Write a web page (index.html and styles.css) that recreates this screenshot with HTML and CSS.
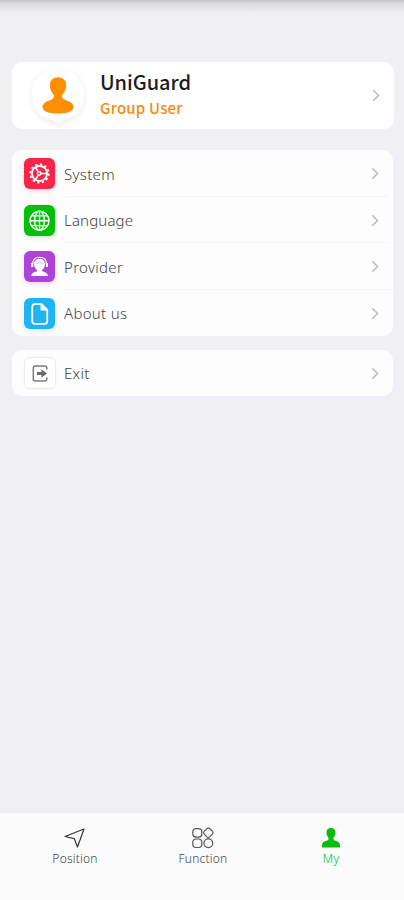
FILE: index.html
```html
<!DOCTYPE html>
<html lang="en">
<head>
<meta charset="utf-8">
<meta name="viewport" content="width=device-width, initial-scale=1">
<title>My</title>
<link rel="stylesheet" href="styles.css">
</head>
<body>
<svg width="0" height="0" class="defs">
  <symbol id="chevron" viewBox="0 0 8 13"><path d="M1.2 1.2 6.6 6.5 1.2 11.8" fill="none" stroke="#bdbdbf" stroke-width="1.600"/></symbol>
</svg>
<div class="top-shade"></div>
<main class="content">
  <section class="card profile">
    <svg class="avatar" viewBox="0 0 56 58">
      <path class="avatar-bg" d="M28 1C43 1 54 12 54 27C54 40 46 50 34 52L28 55L22 52C10 50 2 40 2 27C2 12 13 1 28 1Z" fill="#fff"/>
      <path d="M28 9.200c-5.200 0-8.400 3.500-8.100 8.500.2 4 1.600 6.700 3.900 9.100.7 2.500-.5 4.300-3.800 5.400-4.500 1.400-7.500 3.400-7.500 6.700 0 4.500 6.500 6.500 15.500 6.500s15.500-2 15.500-6.500c0-3.300-3-5.300-7.500-6.700-3.300-1.100-4.500-2.900-3.800-5.400 2.300-2.400 3.700-5.100 3.900-9.100.3-5-2.900-8.500-8.100-8.500Z" fill="#ff8e00"/>
    </svg>
    <div class="who"><h1>UniGuard</h1><p>Group User</p></div>
    <svg class="chev"><use href="#chevron"/></svg>
  </section>

  <section class="card menu">
    <div class="row">
      <span class="icon red"><svg viewBox="0 0 30 30" fill="none" stroke="#fff">
        <circle cx="15" cy="15" r="7.300" stroke-width="1.800"/>
        <circle cx="15" cy="15" r="8.900" stroke-width="1.700" stroke-dasharray="2.300 2.360"/>
        <circle cx="14.700" cy="15" r="1.700" stroke-width="1.400"/>
        <path d="M16.700 15H22M13.700 13.300 11.300 9.200M13.700 16.700 11.300 20.800" stroke-width="1.500"/>
      </svg></span>
      <span class="label system">System</span><svg class="chev"><use href="#chevron"/></svg>
    </div>
    <div class="row">
      <span class="icon green"><svg viewBox="0 0 30 30" fill="none" stroke="#fff" stroke-width="1.300">
        <circle cx="15" cy="15.200" r="9.200"/><ellipse cx="15" cy="15.200" rx="4.700" ry="9.200"/>
        <path d="M15 6v18.400M5.800 15.200h18.400M7.500 10.500h15M7.500 19.900h15"/>
      </svg></span>
      <span class="label language">Language</span><svg class="chev"><use href="#chevron"/></svg>
    </div>
    <div class="row">
      <span class="icon purple"><svg viewBox="0 0 30 30">
        <path d="M15 7.500c-3.300 0-5.200 2.200-5.200 5.200 0 2.500 1 4.400 2.700 5.500v1.300c-3.300.7-5.300 1.900-5.500 4.800h16.200c-.2-2.900-2.300-4.100-5.600-4.800v-1.300c1.700-1.100 2.700-3 2.700-5.500 0-3-2-5.200-5.300-5.200Z" fill="#fff"/>
        <path d="M8.500 12.500C8.500 8 11 6 15 6s6.700 2 6.700 6.500" fill="none" stroke="#fff" stroke-width="1.100"/>
        <path d="M8 11.500v4M22.200 11.500v4" fill="none" stroke="#fff" stroke-width="2"/>
        <path d="M11 12.300c2-.1 3.500-.7 4.500-1.800 1 1 2 1.500 3.500 1.700" fill="none" stroke="#d49bee" stroke-width=".7"/>
      </svg></span>
      <span class="label provider">Provider</span><svg class="chev"><use href="#chevron"/></svg>
    </div>
    <div class="row">
      <span class="icon blue"><svg viewBox="0 0 30 30">
        <path d="M10.500 6h6.500l5.500 5.500v11a2.500 2.500 0 0 1-2.500 2.500h-9.500A2.500 2.500 0 0 1 8 22.500v-14A2.500 2.500 0 0 1 10.500 6Z" fill="none" stroke="#fff" stroke-width="1.700"/>
        <path d="M16.500 6v5.500h6L17 6Z" fill="#fff" stroke="#fff"/>
      </svg></span>
      <span class="label about">About us</span><svg class="chev"><use href="#chevron"/></svg>
    </div>
  </section>

  <section class="card exit">
    <div class="row">
      <span class="icon plain"><svg viewBox="0 0 30 30">
        <path d="M21.800 11.500V10a2 2 0 0 0-2-2h-9.500a2 2 0 0 0-2 2v11a2 2 0 0 0 2 2h9.500a2 2 0 0 0 2-2v-1.500" fill="none" stroke="#7c7c7c" stroke-width="1.500"/>
        <path d="M12 14h4.500v-2.700l5.500 4.200-5.500 4.200V17H12Z" fill="#6c6c6c"/>
      </svg></span>
      <span class="label exit-label">Exit</span><svg class="chev"><use href="#chevron"/></svg>
    </div>
  </section>
</main>
<nav class="tabs">
  <div class="tab"><svg viewBox="0 0 24 24"><path d="M2 10.500 21 3l-6.500 18-3.200-8.300Z" fill="none" stroke="#333" stroke-width="1.200" stroke-linejoin="round"/></svg><span>Position</span></div>
  <div class="tab"><svg viewBox="0 0 24 24" fill="none" stroke="#555" stroke-width="1.200"><rect x="1.800" y="2.600" width="9" height="8.500" rx="3"/><path d="M17.300 2.100q1 0 1.700.7l2.400 2.400q1.300 1.500 0 3L19 10.600q-1.700 1.400-3.400 0l-2.400-2.400q-1.300-1.500 0-3l2.400-2.400q.7-.7 1.700-.7Z"/><rect x="1.800" y="13" width="9" height="8.500" rx="3.200"/><circle cx="17.300" cy="17.200" r="4.400"/></svg><span>Function</span></div>
  <div class="tab active"><svg viewBox="0 0 24 24"><path d="M12 2C9.100 2 7.300 4 7.500 6.800c.1 2.200.8 3.700 2.100 5.100.3 1.600-.4 2.300-2.300 2.900-2.800.9-4.300 2.500-4.500 4.700-.1 1.600.3 2.100 1.500 2.100h15.400c1.200 0 1.600-.5 1.500-2.100-.2-2.200-1.700-3.800-4.500-4.700-1.900-.6-2.600-1.300-2.300-2.900 1.300-1.400 2-2.900 2.100-5.100C16.700 4 14.900 2 12 2Z" fill="#09bd0b"/></svg><span>My</span></div>
</nav>
</body>
</html>
```
FILE: styles.css
```css
* { box-sizing: border-box; }
body {
  margin: 0;
  height: 900px;
  display: flex;
  flex-direction: column;
  overflow: hidden;
  background: #f0eff4;
  font-family: "Noto Sans", sans-serif;
  color: #444;
}
.defs { position: absolute; }
.top-shade { height: 12px; flex: none; background: linear-gradient(#c6c5ca, #dddce1 35%, #ebeaef 90%, #f0eff4); }
.content { flex: 1; padding: 50px 11px 0 12px; }
.card { background: #fdfdfd; border-radius: 10px; }
.profile { height: 67px; margin-right: -1px; display: flex; align-items: center; padding: 0 14px 0 18px; background: #fff; }
.avatar { width: 56px; height: 58px; margin-top: 3px; overflow: visible; }
.avatar-bg { filter: drop-shadow(0 2px 3px rgba(0, 0, 0, .08)); }
.who { margin-left: 14px; flex: 1; font-family: "Noto Sans CJK SC", "Noto Sans", sans-serif; }
h1, p { margin: 0; font-weight: 500; white-space: nowrap; }
h1 { font-size: 20px; line-height: 26px; letter-spacing: -.05px; color: #1c1c1c; margin-top: -4px; }
p { font-size: 15px; line-height: 20px; letter-spacing: .2px; color: #f98a0c; margin-top: 3px; }
.chev { width: 8px; height: 13px; flex: none; }
.menu { height: 186px; margin-top: 21px; display: grid; grid-template-rows: 47px 46px 47px 46px; }
.row { display: flex; align-items: center; padding: 0 14px 0 12px; height: 100%; position: relative; }
.row + .row::before { content: ""; position: absolute; top: -1px; left: 50px; right: 5px; height: 1px; background: #f5f5f6; }
.row:last-child::before { right: 0; }
.icon { width: 31px; height: 31px; border-radius: 6px; flex: none; }
.icon svg { display: block; width: 100%; height: 100%; }
.red { background: #fa2348; box-shadow: 0 2px 5px #fa234830; }
.green { background: #05c008; box-shadow: 0 2px 5px #05c00830; }
.purple { background: #ad43db; box-shadow: 0 2px 5px #ad43db30; }
.blue { background: #20b4f5; box-shadow: 0 2px 5px #20b4f530; }
.plain { width: 32px; height: 32px; margin-right: -1px; background: #fff; border: 1px solid #ececec; box-shadow: 0 1px 3px #00000008; }
.label { flex: 1; margin-left: 9px; font-size: 15px; font-weight: 300; line-height: 20px; letter-spacing: .3px; }
.language { letter-spacing: .15px; }
.exit { height: 46px; margin-top: 14px; }
.tabs { height: 87px; flex: none; display: grid; grid-template-columns: 128px 128px 128px; justify-content: start; padding: 13px 0 0 11px; background: #fbfbfb; }
.tab { display: flex; flex-direction: column; align-items: center; font-size: 12px; font-weight: 300; line-height: 16px; letter-spacing: .2px; }
.tab svg { width: 24px; height: 24px; }
.tab span { margin-top: 1px; }
.active { color: #09bd0b; }
```
